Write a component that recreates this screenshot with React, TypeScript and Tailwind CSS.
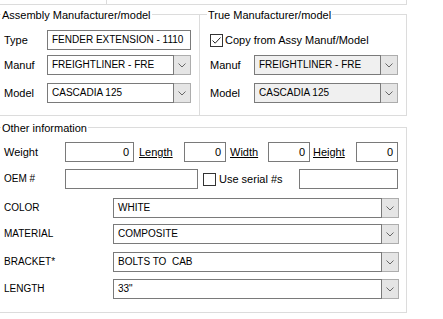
import { ReactNode } from 'react';

const Chevron = () => (
  <svg width="8" height="5" viewBox="0 0 8 5" fill="none">
    <path d="M0.5 0.5 L4 4 L7.5 0.5" stroke="#666" strokeWidth="1" />
  </svg>
);

const Combo = ({ value, width, disabled }: { value: string; width: string; disabled?: boolean }) => (
  <div className={`flex h-[20px] ${width}`}>
    <div
      className={`flex-1 border border-[#7a7a7a] pl-[4px] leading-[18px] text-[10px] whitespace-pre overflow-hidden ${
        disabled ? 'bg-[#f0f0f0]' : 'bg-white'
      }`}
    >
      {value}
    </div>
    <div className="w-[17px] border-y border-r border-[#adadad] bg-[#e5e5e5] flex items-center justify-center">
      <Chevron />
    </div>
  </div>
);

const TextBox = ({ value = '', width, right }: { value?: string; width: string; right?: boolean }) => (
  <div
    className={`h-[20px] border border-[#7a7a7a] bg-white leading-[18px] whitespace-nowrap overflow-hidden ${width} ${
      right ? 'text-right pr-[4px] text-[11px]' : 'pl-[4px] text-[10px]'
    }`}
  >
    {value}
  </div>
);

const CheckBox = ({ checked }: { checked?: boolean }) => (
  <div className="w-[13px] h-[13px] border border-[#333] bg-white flex items-center justify-center shrink-0">
    {checked && (
      <svg width="11" height="11" viewBox="0 0 11 11" fill="none">
        <path d="M1.5 5.5 L4.2 8.2 L9.5 2.5" stroke="#222" strokeWidth="1" />
      </svg>
    )}
  </div>
);

// group box caption sitting on the top border
const Title = ({ children }: { children: ReactNode }) => (
  <div className="-mt-[8px] -ml-[3px] h-[16px] leading-[16px]">
    <span className="bg-white px-[1px]">{children}</span>
  </div>
);

const Label = ({ children, width, caps }: { children: ReactNode; width: string; caps?: boolean }) => (
  <div className={`shrink-0 leading-[20px] ${width} ${caps ? 'text-[10px]' : 'text-[11px]'}`}>{children}</div>
);

const Link = ({ children, width, ml }: { children: ReactNode; width: string; ml: string }) => (
  <div className={`shrink-0 leading-[20px] ${width} ${ml}`}>
    <span className="underline">{children}</span>
  </div>
);

export default function App() {
  return (
    <div
      className="w-[443px] h-[319px] bg-white overflow-hidden text-[11px] text-black"
      style={{ fontFamily: '"Liberation Sans", Arial, sans-serif' }}
    >
      <div className="-ml-[5px] w-[412px]">
        {/* previous boxes, bottom edge only */}
        <div className="flex h-[5px]">
          <div className="w-[112px] border-b border-r border-[#dcdcdc]" />
          <div className="w-[300px] border-b border-r border-[#dcdcdc]" />
        </div>

        <div className="flex mt-[9px]">
          {/* Assembly Manufacturer/model */}
          <div className="w-[205px] border border-[#dcdcdc] pl-[8px] pb-[12px]">
            <Title>Assembly Manufacturer/model</Title>
            <div className="flex mt-[7px]">
              <Label width="w-[43px]">Type</Label>
              <TextBox value="FENDER EXTENSION - 1110" width="w-[144px]" />
            </div>
            <div className="flex mt-[5px]">
              <Label width="w-[43px]">Manuf</Label>
              <Combo value="FREIGHTLINER - FRE" width="w-[144px]" />
            </div>
            <div className="flex mt-[8px]">
              <Label width="w-[43px]">Model</Label>
              <Combo value="CASCADIA 125" width="w-[144px]" />
            </div>
          </div>

          {/* True Manufacturer/model */}
          <div className="w-[207px] border border-l-0 border-[#dcdcdc] pl-[10px] pb-[12px]">
            <Title>True Manufacturer/model</Title>
            <div className="flex items-center h-[20px] mt-[7px]">
              <CheckBox checked />
              <span className="ml-[2px]">Copy from Assy Manuf/Model</span>
            </div>
            <div className="flex mt-[5px]">
              <Label width="w-[44px]">Manuf</Label>
              <Combo value="FREIGHTLINER - FRE" width="w-[144px]" disabled />
            </div>
            <div className="flex mt-[8px]">
              <Label width="w-[44px]">Model</Label>
              <Combo value="CASCADIA 125" width="w-[144px]" disabled />
            </div>
          </div>
        </div>

        {/* Other information */}
        <div className="mt-[11px] border border-[#dcdcdc] pl-[8px] pb-[13px]">
          <Title>Other information</Title>
          <div className="flex mt-[6px]">
            <Label width="w-[61px]">Weight</Label>
            <TextBox value="0" width="w-[69px]" right />
            <Link width="w-[45px]" ml="ml-[5px]">Length</Link>
            <TextBox value="0" width="w-[42px]" right />
            <Link width="w-[38px]" ml="ml-[4px]">Width</Link>
            <TextBox value="0" width="w-[42px]" right />
            <Link width="w-[43px]" ml="ml-[3px]">Height</Link>
            <TextBox value="0" width="w-[42px]" right />
          </div>
          <div className="flex items-center mt-[7px]">
            <Label width="w-[61px]" caps>OEM #</Label>
            <TextBox width="w-[133px]" />
            <div className="ml-[5px]">
              <CheckBox />
            </div>
            <span className="ml-[3px] w-[80px]">Use serial #s</span>
            <TextBox width="w-[99px]" />
          </div>
          <div className="flex mt-[9px]">
            <Label width="w-[109px]" caps>COLOR</Label>
            <Combo value="WHITE" width="w-[286px]" />
          </div>
          <div className="flex mt-[6px]">
            <Label width="w-[109px]" caps>MATERIAL</Label>
            <Combo value="COMPOSITE" width="w-[286px]" />
          </div>
          <div className="flex mt-[8px]">
            <Label width="w-[109px]" caps>BRACKET*</Label>
            <Combo value="BOLTS TO  CAB" width="w-[286px]" />
          </div>
          <div className="flex mt-[7px]">
            <Label width="w-[109px]" caps>LENGTH</Label>
            <Combo value={'33"'} width="w-[286px]" />
          </div>
        </div>
      </div>
    </div>
  );
}
